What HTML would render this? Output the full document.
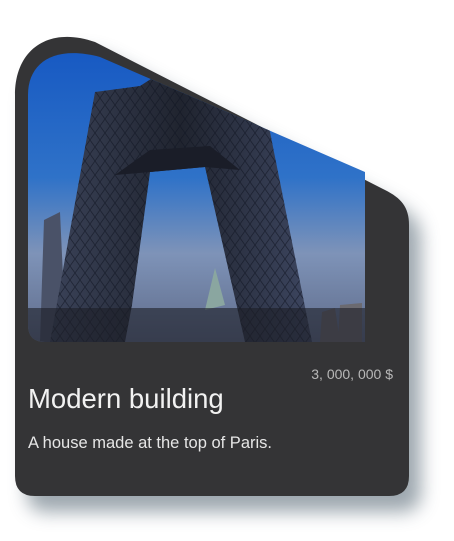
<!DOCTYPE html>
<html><head><style>
html,body{margin:0;padding:0;background:#fff;width:454px;height:541px;overflow:hidden;}
svg{position:absolute;left:0;top:0}
.t{position:absolute;font-family:"Liberation Sans",sans-serif;color:#eee;font-weight:300;white-space:nowrap}
</style></head><body>
<svg width="454" height="541" viewBox="0 0 454 541">
<defs>
<filter id="bl" x="-20%" y="-20%" width="150%" height="150%">
<feGaussianBlur stdDeviation="9"/>
</filter>
<linearGradient id="sky" x1="0" y1="0" x2="0" y2="1">
<stop offset="0" stop-color="#1557c2"/><stop offset="0.45" stop-color="#2f72c8"/><stop offset="0.7" stop-color="#7e93b8"/><stop offset="1" stop-color="#5e6a88"/>
</linearGradient>
<linearGradient id="bd" x1="0" y1="0" x2="1" y2="0">
<stop offset="0" stop-color="#3a4258"/><stop offset="0.5" stop-color="#20242f"/><stop offset="1" stop-color="#3d4660"/>
</linearGradient>
<pattern id="dia" width="10" height="14" patternUnits="userSpaceOnUse">
<path d="M0,0 L10,14 M10,0 L0,14" stroke="#0f1320" stroke-width="0.8" opacity="0.6"/>
</pattern>
<clipPath id="ic"><path d="M28,95 C28,62 55,45 100,57 L365,172 L365,342 L45,342 Q28,342 28,325 Z"/></clipPath>
</defs>
<path d="M15,95 C15,48 50,26 95,42 L385,190 C401,198 409,207 409,225 L409,476 Q409,496 389,496 L35,496 Q15,496 15,476 Z" fill="#7d8a94" filter="url(#bl)" opacity="0.75" transform="translate(12,16)"/>
<path d="M15,95 C15,48 50,26 95,42 L385,190 C401,198 409,207 409,225 L409,476 Q409,496 389,496 L35,496 Q15,496 15,476 Z" fill="#343436"/>
<g clip-path="url(#ic)">
<rect x="28" y="40" width="340" height="305" fill="url(#sky)"/>
<path d="M40,342 L44,220 L60,212 L66,342 Z" fill="#4a5268"/>
<path d="M205,310 L215,268 L225,305 Z" fill="#8aa6a0"/>
<path d="M320,342 L322,312 L335,308 L340,342 Z M338,342 L340,305 L362,303 L362,342 Z" fill="#6b6a70"/>
<path d="M50,342 L95,92 L140,86 L165,70 L240,100 L268,122 L312,342 L245,342 L205,167 L150,172 L132,305 L125,342 Z" fill="url(#bd)"/>
<path d="M50,342 L95,92 L140,86 L165,70 L240,100 L268,122 L312,342 L245,342 L205,167 L150,172 L132,305 L125,342 Z" fill="url(#dia)"/>
<path d="M115,175 L150,150 L210,146 L240,170 L205,167 L150,172 Z" fill="#1a1d28"/>
<rect x="28" y="308" width="340" height="37" fill="#1c1e26" opacity="0.6"/>
</g>
</svg>
<div class="t" style="right:61px;top:366px;font-size:14px;color:#b8b8b8">3, 000, 000 $</div>
<div class="t" style="left:28px;top:383px;font-size:27.5px;color:#f2f2f2">Modern building</div>
<div class="t" style="left:28px;top:434px;font-size:16.5px;color:#e6e6e6">A house made at the top of Paris.</div>
</body></html>
